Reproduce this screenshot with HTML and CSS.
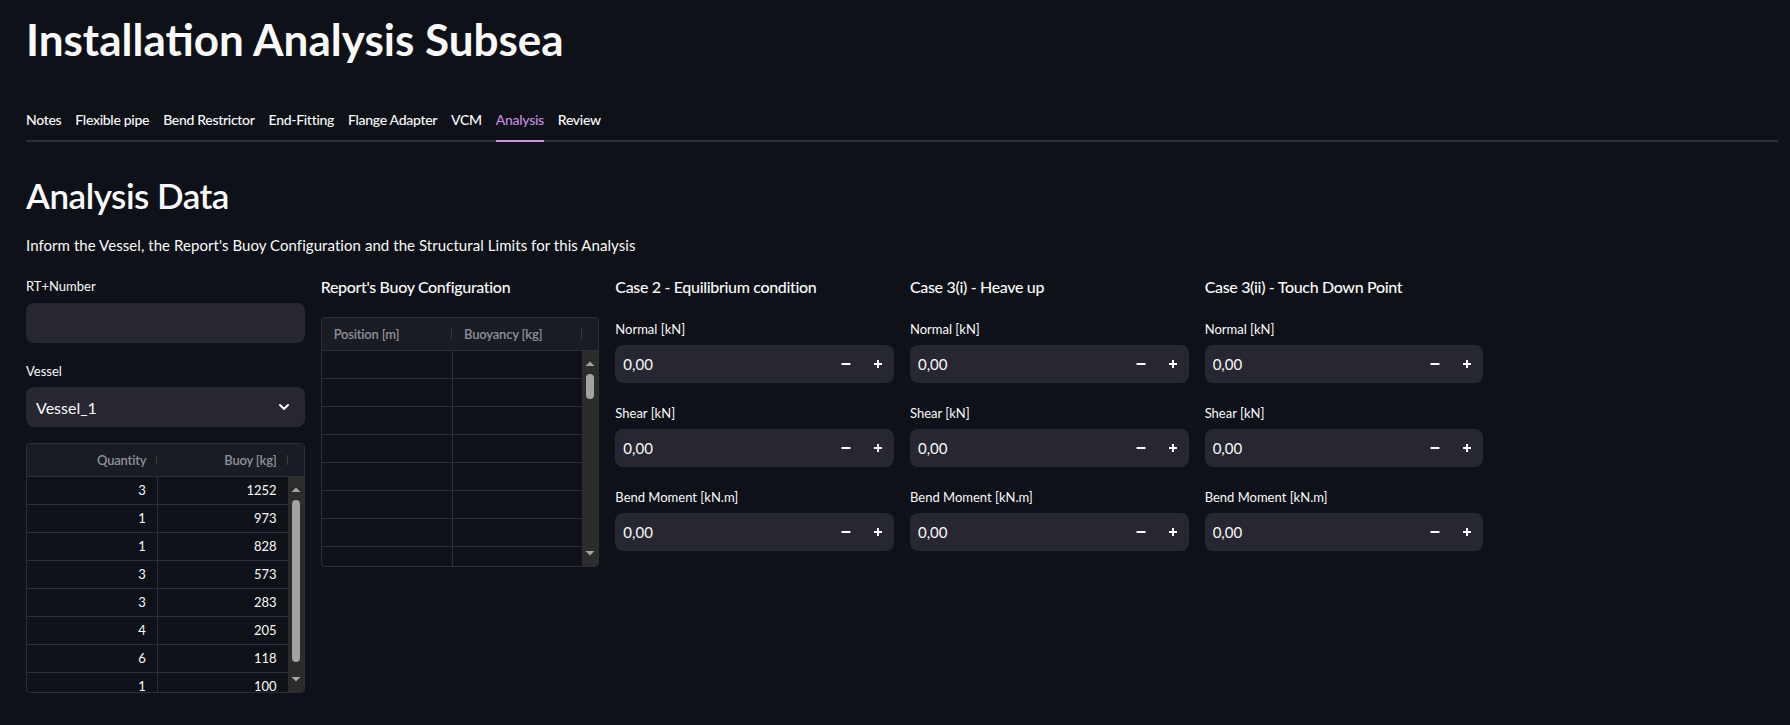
FILE: index.html
```html
<!DOCTYPE html>
<html lang="en">
<head>
<meta charset="utf-8">
<title>Installation Analysis Subsea</title>
<link rel="stylesheet" href="styles.css">
</head>
<body>
<div class="app">
  <h1 class="title">Installation Analysis Subsea</h1>
  <nav class="tabs">
    <span class="tab">Notes</span>
    <span class="tab">Flexible pipe</span>
    <span class="tab">Bend Restrictor</span>
    <span class="tab">End-Fitting</span>
    <span class="tab">Flange Adapter</span>
    <span class="tab">VCM</span>
    <span class="tab tab-active">Analysis</span>
    <span class="tab">Review</span>
  </nav>

  <h2 class="section-title">Analysis Data</h2>
  <p class="intro">Inform the Vessel, the Report's Buoy Configuration and the Structural Limits for this Analysis</p>

  <div class="columns">
    <div class="col">
      <label class="field-label first-label">RT+Number</label>
      <div class="text-input"></div>
      <label class="field-label vessel-label">Vessel</label>
      <div class="select">
        <span>Vessel_1</span>
        <svg class="chevron" width="10" height="7" viewBox="0 0 10 7"><path d="M1 1l4 4 4-4" fill="none" stroke="#fafafa" stroke-width="2" stroke-linecap="round" stroke-linejoin="round"/></svg>
      </div>
      <div class="grid grid-numeric vessel-grid">
        <div class="grid-head">
          <div class="grid-hcell">Quantity</div>
          <div class="grid-hcell">Buoy [kg]</div>
          <div class="grid-hspacer"></div>
        </div>
        <div class="grid-body">
          <div class="grid-rows">
            <div class="grid-row"><div class="grid-cell">3</div><div class="grid-cell">1252</div></div>
            <div class="grid-row"><div class="grid-cell">1</div><div class="grid-cell">973</div></div>
            <div class="grid-row"><div class="grid-cell">1</div><div class="grid-cell">828</div></div>
            <div class="grid-row"><div class="grid-cell">3</div><div class="grid-cell">573</div></div>
            <div class="grid-row"><div class="grid-cell">3</div><div class="grid-cell">283</div></div>
            <div class="grid-row"><div class="grid-cell">4</div><div class="grid-cell">205</div></div>
            <div class="grid-row"><div class="grid-cell">6</div><div class="grid-cell">118</div></div>
            <div class="grid-row"><div class="grid-cell">1</div><div class="grid-cell">100</div></div>
          </div>
          <div class="scrollbar">
            <svg class="sb-arrow" width="16" height="18" viewBox="0 0 16 18"><polygon points="3.5,11 12.5,11 8,6.5" fill="#a3a3a3"/></svg>
            <div class="sb-thumb sb-thumb-long"></div>
            <svg class="sb-arrow sb-arrow-down" width="16" height="18" viewBox="0 0 16 18"><polygon points="3.5,7 12.5,7 8,11.5" fill="#a3a3a3"/></svg>
          </div>
        </div>
      </div>
    </div>

    <div class="col">
      <div class="col-heading">Report's Buoy Configuration</div>
      <div class="grid buoy-grid">
        <div class="grid-head">
          <div class="grid-hcell">Position [m]</div>
          <div class="grid-hcell">Buoyancy [kg]</div>
          <div class="grid-hspacer"></div>
        </div>
        <div class="grid-body">
          <div class="grid-rows">
            <div class="grid-row"><div class="grid-cell"></div><div class="grid-cell"></div></div>
            <div class="grid-row"><div class="grid-cell"></div><div class="grid-cell"></div></div>
            <div class="grid-row"><div class="grid-cell"></div><div class="grid-cell"></div></div>
            <div class="grid-row"><div class="grid-cell"></div><div class="grid-cell"></div></div>
            <div class="grid-row"><div class="grid-cell"></div><div class="grid-cell"></div></div>
            <div class="grid-row"><div class="grid-cell"></div><div class="grid-cell"></div></div>
            <div class="grid-row"><div class="grid-cell"></div><div class="grid-cell"></div></div>
            <div class="grid-row"><div class="grid-cell"></div><div class="grid-cell"></div></div>
          </div>
          <div class="scrollbar">
            <svg class="sb-arrow" width="16" height="18" viewBox="0 0 16 18"><polygon points="3.5,11 12.5,11 8,6.5" fill="#a3a3a3"/></svg>
            <div class="sb-thumb sb-thumb-short"></div>
            <svg class="sb-arrow sb-arrow-down" width="16" height="18" viewBox="0 0 16 18"><polygon points="3.5,7 12.5,7 8,11.5" fill="#a3a3a3"/></svg>
          </div>
        </div>
      </div>
    </div>

    <div class="col case">
      <div class="col-heading">Case 2 - Equilibrium condition</div>
      <label class="field-label">Normal [kN]</label>
      <div class="num-input"><span class="num-value">0,00</span><span class="num-btn"><svg width="10" height="10" viewBox="0 0 10 10"><path d="M0.5 5h9" stroke="#fafafa" stroke-width="2"/></svg></span><span class="num-btn"><svg width="10" height="10" viewBox="0 0 10 10"><path d="M1 5h8M5 1v8" stroke="#fafafa" stroke-width="2"/></svg></span></div>
      <label class="field-label">Shear [kN]</label>
      <div class="num-input"><span class="num-value">0,00</span><span class="num-btn"><svg width="10" height="10" viewBox="0 0 10 10"><path d="M0.5 5h9" stroke="#fafafa" stroke-width="2"/></svg></span><span class="num-btn"><svg width="10" height="10" viewBox="0 0 10 10"><path d="M1 5h8M5 1v8" stroke="#fafafa" stroke-width="2"/></svg></span></div>
      <label class="field-label">Bend Moment [kN.m]</label>
      <div class="num-input"><span class="num-value">0,00</span><span class="num-btn"><svg width="10" height="10" viewBox="0 0 10 10"><path d="M0.5 5h9" stroke="#fafafa" stroke-width="2"/></svg></span><span class="num-btn"><svg width="10" height="10" viewBox="0 0 10 10"><path d="M1 5h8M5 1v8" stroke="#fafafa" stroke-width="2"/></svg></span></div>
    </div>

    <div class="col case">
      <div class="col-heading">Case 3(i) - Heave up</div>
      <label class="field-label">Normal [kN]</label>
      <div class="num-input"><span class="num-value">0,00</span><span class="num-btn"><svg width="10" height="10" viewBox="0 0 10 10"><path d="M0.5 5h9" stroke="#fafafa" stroke-width="2"/></svg></span><span class="num-btn"><svg width="10" height="10" viewBox="0 0 10 10"><path d="M1 5h8M5 1v8" stroke="#fafafa" stroke-width="2"/></svg></span></div>
      <label class="field-label">Shear [kN]</label>
      <div class="num-input"><span class="num-value">0,00</span><span class="num-btn"><svg width="10" height="10" viewBox="0 0 10 10"><path d="M0.5 5h9" stroke="#fafafa" stroke-width="2"/></svg></span><span class="num-btn"><svg width="10" height="10" viewBox="0 0 10 10"><path d="M1 5h8M5 1v8" stroke="#fafafa" stroke-width="2"/></svg></span></div>
      <label class="field-label">Bend Moment [kN.m]</label>
      <div class="num-input"><span class="num-value">0,00</span><span class="num-btn"><svg width="10" height="10" viewBox="0 0 10 10"><path d="M0.5 5h9" stroke="#fafafa" stroke-width="2"/></svg></span><span class="num-btn"><svg width="10" height="10" viewBox="0 0 10 10"><path d="M1 5h8M5 1v8" stroke="#fafafa" stroke-width="2"/></svg></span></div>
    </div>

    <div class="col case">
      <div class="col-heading">Case 3(ii) - Touch Down Point</div>
      <label class="field-label">Normal [kN]</label>
      <div class="num-input"><span class="num-value">0,00</span><span class="num-btn"><svg width="10" height="10" viewBox="0 0 10 10"><path d="M0.5 5h9" stroke="#fafafa" stroke-width="2"/></svg></span><span class="num-btn"><svg width="10" height="10" viewBox="0 0 10 10"><path d="M1 5h8M5 1v8" stroke="#fafafa" stroke-width="2"/></svg></span></div>
      <label class="field-label">Shear [kN]</label>
      <div class="num-input"><span class="num-value">0,00</span><span class="num-btn"><svg width="10" height="10" viewBox="0 0 10 10"><path d="M0.5 5h9" stroke="#fafafa" stroke-width="2"/></svg></span><span class="num-btn"><svg width="10" height="10" viewBox="0 0 10 10"><path d="M1 5h8M5 1v8" stroke="#fafafa" stroke-width="2"/></svg></span></div>
      <label class="field-label">Bend Moment [kN.m]</label>
      <div class="num-input"><span class="num-value">0,00</span><span class="num-btn"><svg width="10" height="10" viewBox="0 0 10 10"><path d="M0.5 5h9" stroke="#fafafa" stroke-width="2"/></svg></span><span class="num-btn"><svg width="10" height="10" viewBox="0 0 10 10"><path d="M1 5h8M5 1v8" stroke="#fafafa" stroke-width="2"/></svg></span></div>
    </div>

    <div class="col"></div>
  </div>
</div>
</body>
</html>
```

FILE: styles.css
```css
* {
  box-sizing: border-box;
}

html, body {
  margin: 0;
  background: #0e1117;
}

body {
  color: #fafafa;
  font-family: Lato, "Liberation Sans", sans-serif;
  height: 725px;
  overflow: hidden;
}

.app {
  padding: 13px 12px 0 26px;
}

.title {
  margin: 0;
  font-size: 44px;
  font-weight: 700;
  line-height: 53px;
}

.tabs {
  display: flex;
  gap: 14px;
  margin-top: 44px;
  border-bottom: 2px solid #2e3038;
}

.tab {
  font-size: 14px;
  font-weight: 500;
  letter-spacing: -0.3px;
  line-height: 20px;
  padding-bottom: 10px;
  margin-bottom: -2px;
  border-bottom: 2px solid transparent;
}

.tab-active {
  color: #c98ce0;
  border-bottom-color: #d28ee8;
}

.section-title {
  margin: 32px 0 0;
  font-size: 35px;
  font-weight: 600;
  letter-spacing: -0.5px;
  line-height: 42px;
}

.intro {
  margin: 17px 0 0;
  font-size: 15px;
  letter-spacing: 0.06px;
  line-height: 24px;
}

.columns {
  display: grid;
  grid-template-columns: repeat(6, 1fr);
  column-gap: 16px;
  margin-top: 18px;
  align-items: start;
}

.col {
  display: flex;
  flex-direction: column;
  min-width: 0;
}

.field-label {
  display: block;
  font-size: 13px;
  line-height: 20px;
}

.first-label {
  margin-top: 1px;
}

.vessel-label {
  margin-top: 18px;
}

.col-heading {
  font-size: 16px;
  font-weight: 500;
  letter-spacing: -0.33px;
  line-height: 24px;
  white-space: nowrap;
}

.text-input {
  height: 40px;
  margin-top: 7px;
  background: #262730;
  border-radius: 8px;
}

.select {
  height: 40px;
  margin-top: 6px;
  display: flex;
  align-items: center;
  justify-content: space-between;
  padding: 0 16px 0 10px;
  background: #262730;
  border-radius: 8px;
  font-size: 16px;
}

.chevron {
  display: block;
}

/* data grids */
.grid {
  height: 250px;
  border: 1px solid #2d2f37;
  border-radius: 4px;
  overflow: hidden;
  display: flex;
  flex-direction: column;
  background: #0e1117;
}

.vessel-grid {
  margin-top: 16px;
}

.buoy-grid {
  margin-top: 18px;
}

.grid-head {
  height: 33px;
  flex: none;
  display: flex;
  background: #1a1c23;
  border-bottom: 1px solid #2d2f37;
}

.grid-hcell {
  flex: 1;
  position: relative;
  padding: 0 11px 0 12px;
  font-size: 13px;
  font-weight: 600;
  letter-spacing: -0.2px;
  color: #8e9098;
  line-height: 32px;
  white-space: nowrap;
}

.grid-hcell::after {
  content: "";
  position: absolute;
  right: 0;
  top: 11px;
  width: 1px;
  height: 10px;
  background: #3a3c44;
}

.grid-hspacer {
  width: 16px;
  flex: none;
}

.grid-body {
  flex: 1;
  display: flex;
  min-height: 0;
}

.grid-rows {
  flex: 1;
  overflow: hidden;
}

.grid-row {
  display: flex;
  height: 28px;
  border-bottom: 1px solid #2d2f37;
}

.grid-cell {
  flex: 1;
  padding: 0 11px 0 12px;
  font-size: 13px;
  line-height: 27px;
  border-right: 1px solid #2d2f37;
}

.grid-cell:last-child {
  border-right: none;
}

.grid-numeric .grid-hcell,
.grid-numeric .grid-cell {
  text-align: right;
}

.scrollbar {
  width: 16px;
  flex: none;
  background: #2c2c2e;
  display: flex;
  flex-direction: column;
  align-items: center;
  padding: 4px 0;
}

.sb-arrow {
  display: block;
  flex: none;
}

.sb-arrow-down {
  margin-top: auto;
}

.sb-thumb {
  width: 8px;
  margin-top: 1px;
  border-radius: 4px;
  background: #a3a3a3;
}

.sb-thumb-long {
  height: 162px;
}

.sb-thumb-short {
  height: 25px;
}

/* number inputs */
.case .field-label {
  margin-top: 20px;
}

.num-input {
  height: 38px;
  margin-top: 6px;
  display: flex;
  align-items: center;
  background: #262730;
  border-radius: 8px;
}

.num-value {
  flex: 1;
  padding-left: 8px;
  font-size: 15px;
}

.num-btn {
  width: 32px;
  height: 100%;
  display: flex;
  align-items: center;
  justify-content: center;
}

.num-btn svg {
  display: block;
}
```
